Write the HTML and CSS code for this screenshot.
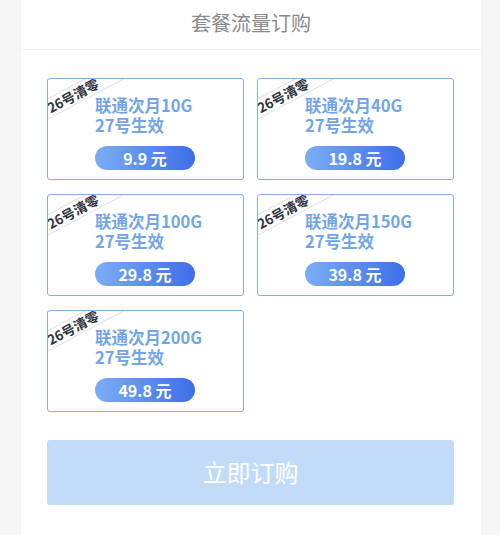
FILE: index.html
```html
<!DOCTYPE html>
<html lang="zh">
<head>
<meta charset="utf-8">
<link rel="stylesheet" href="styles.css">
</head>
<body>
<div class="page">
  <div class="header">套餐流量订购</div>
  <div class="grid">
    <div class="card"><div class="ribbon">26号清零</div><div class="name">联通次月10G<br>27号生效</div><div class="price">9.9 元</div></div>
    <div class="card"><div class="ribbon">26号清零</div><div class="name">联通次月40G<br>27号生效</div><div class="price">19.8 元</div></div>
    <div class="card"><div class="ribbon">26号清零</div><div class="name">联通次月100G<br>27号生效</div><div class="price">29.8 元</div></div>
    <div class="card"><div class="ribbon">26号清零</div><div class="name">联通次月150G<br>27号生效</div><div class="price">39.8 元</div></div>
    <div class="card"><div class="ribbon">26号清零</div><div class="name">联通次月200G<br>27号生效</div><div class="price">49.8 元</div></div>
  </div>
  <div class="buy">立即订购</div>
</div>
</body>
</html>
```
FILE: styles.css
```css
* { box-sizing: border-box; }
html, body { margin: 0; padding: 0; }
body {
  background: #f6f6f6;
  font-family: "Noto Sans CJK SC", "Noto Sans", sans-serif;
}
.page {
  width: 460px;
  height: 535px;
  margin-left: 21px;
  background: #fff;
}
.header {
  height: 50px;
  line-height: 46px;
  text-align: center;
  font-size: 20px;
  color: #8a8a8a;
  border-bottom: 1px solid #f3f3f3;
}
.grid {
  display: grid;
  grid-template-columns: 197px 197px;
  column-gap: 13px;
  row-gap: 14px;
  padding: 28px 0 0 26px;
}
.card {
  position: relative;
  height: 102px;
  border: 1.6px solid #88aee6;
  border-radius: 3px;
  overflow: hidden;
  padding: 16px 0 0 47px;
}
.ribbon {
  position: absolute;
  left: -40px;
  top: 7px;
  width: 130px;
  height: 19px;
  line-height: 17px;
  transform: rotate(-28deg);
  border-top: 1px solid #e0e0e0;
  border-bottom: 1px solid #e0e0e0;
  background: #fff;
  text-align: center;
  font-size: 13.5px;
  font-weight: bold;
  color: #2f3440;
}
.name {
  font-size: 16.5px;
  line-height: 20px;
  font-weight: bold;
  color: #72a5e6;
}
.price {
  margin-top: 11px;
  width: 100px;
  height: 24px;
  line-height: 24px;
  border-radius: 12px;
  background: linear-gradient(90deg, #7badf5, #3e6ee8);
  color: #fff;
  text-align: center;
  font-size: 16px;
  font-weight: bold;
}
.buy {
  margin: 28px 0 0 26px;
  width: 407px;
  height: 65px;
  line-height: 64px;
  background: #c2dbf9;
  border-radius: 3px;
  color: #fff;
  text-align: center;
  font-size: 24px;
}
```
